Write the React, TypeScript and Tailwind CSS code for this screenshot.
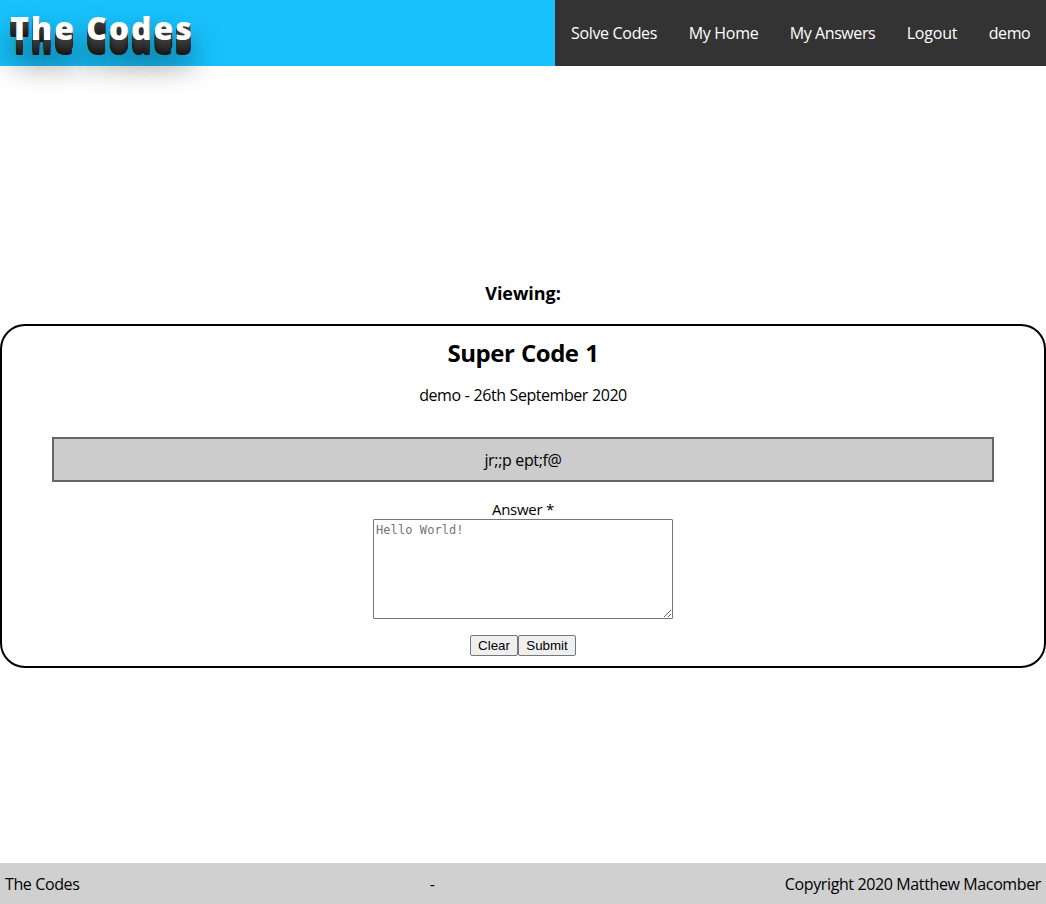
import React from "react";

const navItems = [
  { label: "Solve Codes", style: "w-[118px] tracking-[-0.32px]" },
  { label: "My Home", style: "w-[101px] tracking-[-0.3px]" },
  { label: "My Answers", style: "w-[117px] tracking-[-0.4px]" },
  { label: "Logout", style: "w-[82px] tracking-[-0.2px]" },
  { label: "demo", style: "w-[73px] tracking-[-0.45px]" },
];

const titleShadow =
  "[text-shadow:0_1px_0_#3a3a3a,0_2px_0_#383838,0_3px_0_#363636,0_4px_0_#343434,0_5px_0_#323232,0_6px_0_#303030,0_7px_0_#2e2e2e,0_8px_0_#2b2b2b,0_9px_0_#282828,0_10px_0_#252525,0_11px_0_#222,0_12px_0_#1f1f1f,0_13px_0_#1c1c1c,0_14px_0_#191919,0_15px_0_#161616,0_22px_30px_rgba(0,0,0,0.9)]";

export default function App() {
  return (
    <div className="flex h-[904px] flex-col bg-white font-['Open_Sans',sans-serif] text-base leading-[21px] text-black">
      <header className="flex h-[66px] shrink-0 bg-[#18c1fb]">
        <h1 className={"grow pl-[10px] pt-[5px] text-[32px] font-extrabold leading-[46px] tracking-[1.9px] text-white " + titleShadow}>
          The Codes
        </h1>
        <nav className="flex w-[491px] items-center bg-[#333] pt-px text-white">
          {navItems.map((item) => (
            <a key={item.label} href="#" className={"whitespace-nowrap text-center " + item.style}>
              {item.label}
            </a>
          ))}
        </nav>
      </header>
      <main className="flex grow flex-col">
        <h3 className="mt-[215px] text-center text-lg font-bold leading-6 tracking-[-0.05px]">Viewing:</h3>
        <section className="mt-[19px] flex h-[344px] flex-col items-center rounded-[25px] border-2 border-black px-[50px]">
          <h2 className="mt-[11px] text-2xl font-bold leading-8 tracking-[-0.5px] [word-spacing:1px]">Super Code 1</h2>
          <p className="mt-4 tracking-[-0.45px] [word-spacing:0.4px]">demo - 26th September 2020</p>
          <div className="mt-[31px] flex h-[45px] w-full items-center justify-center border-2 border-[#666] bg-[#ccc] pt-0.5 tracking-[-0.35px]">
            jr;;p ept;f@
          </div>
          <label htmlFor="answer" className="mt-[17px] text-[15px] leading-5 tracking-[-0.25px]">Answer *</label>
          <textarea
            id="answer"
            placeholder="Hello World!"
            className="h-[100px] w-[300px] resize rounded-[1px] border border-[#767676] bg-white p-0.5 font-['DejaVu_Sans_Mono',monospace] text-[12px] leading-[17px] tracking-[0.08px] placeholder:text-[#757575]"
          />
          <div className="mt-4 flex font-['Liberation_Sans',sans-serif] text-[13.333px] leading-[15px]">
            <button className="h-[21px] w-12 rounded-[2px] border border-[#767676] bg-[#efefef]">Clear</button>
            <button className="h-[21px] w-[58px] rounded-[2px] border border-[#767676] bg-[#efefef]">Submit</button>
          </div>
        </section>
      </main>
      <footer className="flex h-[41px] shrink-0 items-center justify-between bg-[#d0d0d0] px-[5px] pt-px tracking-[-0.38px]">
        <span>The Codes</span>
        <span>-</span>
        <span>Copyright 2020 Matthew Macomber</span>
      </footer>
    </div>
  );
}
